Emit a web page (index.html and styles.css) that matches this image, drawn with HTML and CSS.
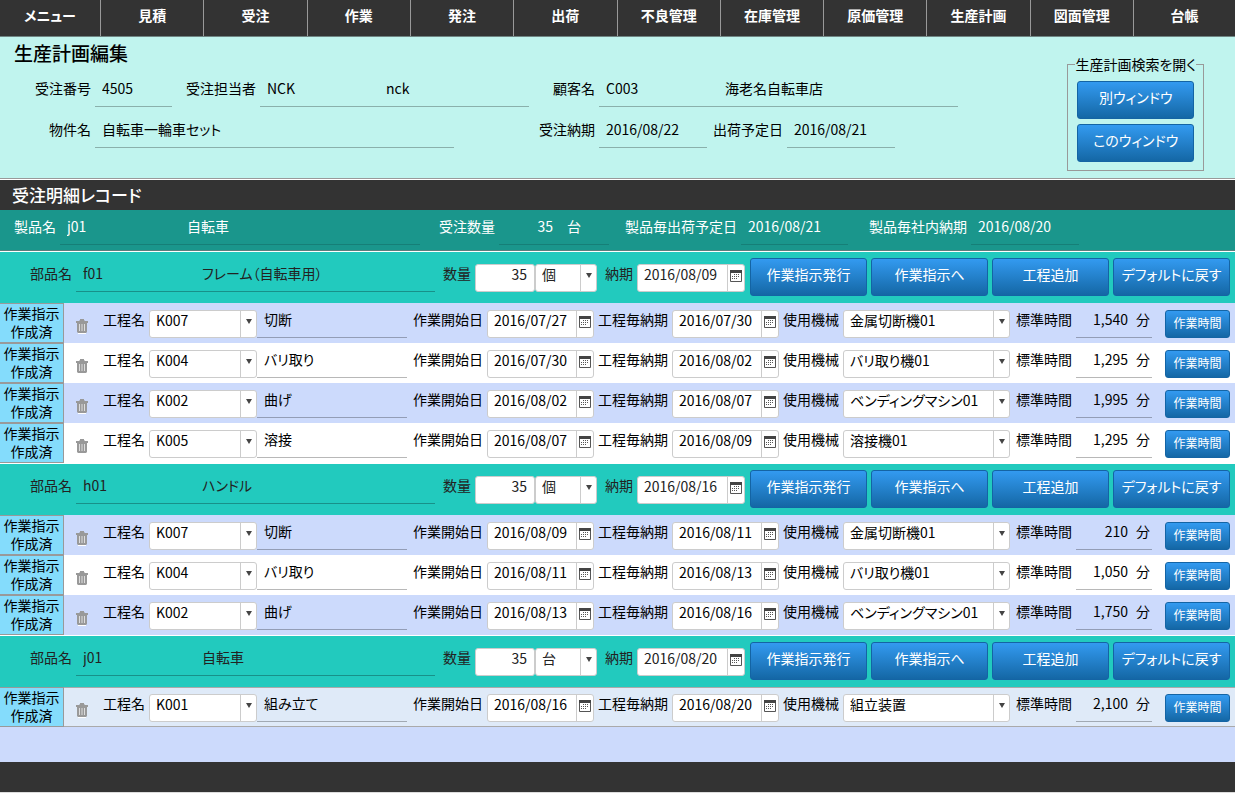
FILE: index.html
```html
<!DOCTYPE html>
<html lang="ja">
<head>
    <meta charset="UTF-8">
    <meta name="viewport" content="width=device-width, initial-scale=1.0">
    <title>生産計画編集</title>
    <link rel="stylesheet" href="styles.css">
</head>
<body>

    <svg class="sprite" aria-hidden="true">
        <symbol id="icon-calendar" viewBox="0 0 12 12">
            <path d="M0.5 0.5h11v11h-11z" fill="#fff" stroke="#555"/>
            <path d="M0 0h12v3H0z" fill="#444"/>
            <path d="M4 4.5h6M2 6.5h8M2 8.5h6" stroke="#555" stroke-dasharray="1 1"/>
        </symbol>
        <symbol id="icon-trash" viewBox="0 0 12 15">
            <path d="M4 0h4v1l1 1h3v2H0V2h3l1-1z" fill="#999"/>
            <path d="M1 4h10v9l-1 1H2l-1-1z" fill="#999"/>
            <path d="M3.5 5v7M6 5v7M8.5 5v7" stroke="#ddd"/>
            <path d="M2 14.5h8" stroke="#fff"/>
        </symbol>
    </svg>

    <nav class="menu">
        <a href="#">メニュー</a>
        <a href="#">見積</a>
        <a href="#">受注</a>
        <a href="#">作業</a>
        <a href="#">発注</a>
        <a href="#">出荷</a>
        <a href="#">不良管理</a>
        <a href="#">在庫管理</a>
        <a href="#">原価管理</a>
        <a href="#">生産計画</a>
        <a href="#">図面管理</a>
        <a href="#">台帳</a>
    </nav>

    <header class="order">
        <div class="order-info">
            <h1>生産計画編集</h1>
            <div class="order-row customer-row">
                <label for="order-no">受注番号</label>
                <input class="line" id="order-no" value="4505" readonly>
                <label for="staff">受注担当者</label>
                <input class="line" id="staff" value="NCK" readonly>
                <input class="line" aria-label="担当者名" value="nck" readonly>
                <label for="customer">顧客名</label>
                <input class="line" id="customer" value="C003" readonly>
                <input class="line" aria-label="顧客名称" value="海老名自転車店" readonly>
            </div>
            <div class="order-row item-row">
                <label for="item">物件名</label>
                <input class="line" id="item" value="自転車一輪車セット" readonly>
                <label for="due">受注納期</label>
                <input class="line" id="due" value="2016/08/22" readonly>
                <label for="ship">出荷予定日</label>
                <input class="line" id="ship" value="2016/08/21" readonly>
            </div>
        </div>
        <fieldset class="search">
            <legend>生産計画検索を開く</legend>
            <button type="button" class="btn">別ウィンドウ</button>
            <button type="button" class="btn">このウィンドウ</button>
        </fieldset>
    </header>

    <main>
        <h2>受注明細レコード</h2>

        <div class="product">
            <label for="product">製品名</label>
            <input class="line" id="product" value="j01" readonly>
            <input class="line" aria-label="製品名称" value="自転車" readonly>
            <label for="order-qty">受注数量</label>
            <input class="line num" id="order-qty" value="35" readonly>
            <input class="line" aria-label="単位" value="台" readonly>
            <label for="product-ship">製品毎出荷予定日</label>
            <input class="line" id="product-ship" value="2016/08/21" readonly>
            <label for="product-due">製品毎社内納期</label>
            <input class="line" id="product-due" value="2016/08/20" readonly>
        </div>

        <!-- f01 フレーム -->
        <section>
            <div class="part">
                <label for="a-part">部品名</label>
                <input class="line" id="a-part" value="f01" readonly>
                <input class="line" aria-label="部品名称" value="フレーム（自転車用）" readonly>
                <label for="a-qty">数量</label>
                <input class="box num" id="a-qty" value="35">
                <span class="combo"><select class="box" aria-label="単位"><option>個</option></select></span>
                <label for="a-due">納期</label>
                <span class="date"><input class="box" id="a-due" value="2016/08/09"><button type="button" aria-label="日付選択"><svg><use href="#icon-calendar"/></svg></button></span>
                <div class="actions">
                    <button type="button" class="btn">作業指示発行</button>
                    <button type="button" class="btn">作業指示へ</button>
                    <button type="button" class="btn">工程追加</button>
                    <button type="button" class="btn">デフォルトに戻す</button>
                </div>
            </div>

            <div class="process">
                <div class="status">作業指示<br>作成済</div>
                <div class="fields">
                    <button type="button" class="trash" aria-label="削除"><svg><use href="#icon-trash"/></svg></button>
                    <label for="a1-code">工程名</label>
                    <span class="combo"><select class="box" id="a1-code"><option>K007</option></select></span>
                    <input class="line" aria-label="工程名称" value="切断" readonly>
                    <label for="a1-start">作業開始日</label>
                    <span class="date"><input class="box" id="a1-start" value="2016/07/27"><button type="button" aria-label="日付選択"><svg><use href="#icon-calendar"/></svg></button></span>
                    <label for="a1-end">工程毎納期</label>
                    <span class="date"><input class="box" id="a1-end" value="2016/07/30"><button type="button" aria-label="日付選択"><svg><use href="#icon-calendar"/></svg></button></span>
                    <label for="a1-machine">使用機械</label>
                    <span class="combo"><select class="box" id="a1-machine"><option>金属切断機01</option></select></span>
                    <label for="a1-time">標準時間</label>
                    <input class="line num" id="a1-time" value="1,540" readonly>
                    <span class="unit">分</span>
                    <button type="button" class="btn small">作業時間</button>
                </div>
            </div>

            <div class="process">
                <div class="status">作業指示<br>作成済</div>
                <div class="fields">
                    <button type="button" class="trash" aria-label="削除"><svg><use href="#icon-trash"/></svg></button>
                    <label for="a2-code">工程名</label>
                    <span class="combo"><select class="box" id="a2-code"><option>K004</option></select></span>
                    <input class="line" aria-label="工程名称" value="バリ取り" readonly>
                    <label for="a2-start">作業開始日</label>
                    <span class="date"><input class="box" id="a2-start" value="2016/07/30"><button type="button" aria-label="日付選択"><svg><use href="#icon-calendar"/></svg></button></span>
                    <label for="a2-end">工程毎納期</label>
                    <span class="date"><input class="box" id="a2-end" value="2016/08/02"><button type="button" aria-label="日付選択"><svg><use href="#icon-calendar"/></svg></button></span>
                    <label for="a2-machine">使用機械</label>
                    <span class="combo"><select class="box" id="a2-machine"><option>バリ取り機01</option></select></span>
                    <label for="a2-time">標準時間</label>
                    <input class="line num" id="a2-time" value="1,295" readonly>
                    <span class="unit">分</span>
                    <button type="button" class="btn small">作業時間</button>
                </div>
            </div>

            <div class="process">
                <div class="status">作業指示<br>作成済</div>
                <div class="fields">
                    <button type="button" class="trash" aria-label="削除"><svg><use href="#icon-trash"/></svg></button>
                    <label for="a3-code">工程名</label>
                    <span class="combo"><select class="box" id="a3-code"><option>K002</option></select></span>
                    <input class="line" aria-label="工程名称" value="曲げ" readonly>
                    <label for="a3-start">作業開始日</label>
                    <span class="date"><input class="box" id="a3-start" value="2016/08/02"><button type="button" aria-label="日付選択"><svg><use href="#icon-calendar"/></svg></button></span>
                    <label for="a3-end">工程毎納期</label>
                    <span class="date"><input class="box" id="a3-end" value="2016/08/07"><button type="button" aria-label="日付選択"><svg><use href="#icon-calendar"/></svg></button></span>
                    <label for="a3-machine">使用機械</label>
                    <span class="combo"><select class="box" id="a3-machine"><option>ベンディングマシン01</option></select></span>
                    <label for="a3-time">標準時間</label>
                    <input class="line num" id="a3-time" value="1,995" readonly>
                    <span class="unit">分</span>
                    <button type="button" class="btn small">作業時間</button>
                </div>
            </div>

            <div class="process">
                <div class="status">作業指示<br>作成済</div>
                <div class="fields">
                    <button type="button" class="trash" aria-label="削除"><svg><use href="#icon-trash"/></svg></button>
                    <label for="a4-code">工程名</label>
                    <span class="combo"><select class="box" id="a4-code"><option>K005</option></select></span>
                    <input class="line" aria-label="工程名称" value="溶接" readonly>
                    <label for="a4-start">作業開始日</label>
                    <span class="date"><input class="box" id="a4-start" value="2016/08/07"><button type="button" aria-label="日付選択"><svg><use href="#icon-calendar"/></svg></button></span>
                    <label for="a4-end">工程毎納期</label>
                    <span class="date"><input class="box" id="a4-end" value="2016/08/09"><button type="button" aria-label="日付選択"><svg><use href="#icon-calendar"/></svg></button></span>
                    <label for="a4-machine">使用機械</label>
                    <span class="combo"><select class="box" id="a4-machine"><option>溶接機01</option></select></span>
                    <label for="a4-time">標準時間</label>
                    <input class="line num" id="a4-time" value="1,295" readonly>
                    <span class="unit">分</span>
                    <button type="button" class="btn small">作業時間</button>
                </div>
            </div>
        </section>

        <!-- h01 ハンドル -->
        <section>
            <div class="part">
                <label for="b-part">部品名</label>
                <input class="line" id="b-part" value="h01" readonly>
                <input class="line" aria-label="部品名称" value="ハンドル" readonly>
                <label for="b-qty">数量</label>
                <input class="box num" id="b-qty" value="35">
                <span class="combo"><select class="box" aria-label="単位"><option>個</option></select></span>
                <label for="b-due">納期</label>
                <span class="date"><input class="box" id="b-due" value="2016/08/16"><button type="button" aria-label="日付選択"><svg><use href="#icon-calendar"/></svg></button></span>
                <div class="actions">
                    <button type="button" class="btn">作業指示発行</button>
                    <button type="button" class="btn">作業指示へ</button>
                    <button type="button" class="btn">工程追加</button>
                    <button type="button" class="btn">デフォルトに戻す</button>
                </div>
            </div>

            <div class="process">
                <div class="status">作業指示<br>作成済</div>
                <div class="fields">
                    <button type="button" class="trash" aria-label="削除"><svg><use href="#icon-trash"/></svg></button>
                    <label for="b1-code">工程名</label>
                    <span class="combo"><select class="box" id="b1-code"><option>K007</option></select></span>
                    <input class="line" aria-label="工程名称" value="切断" readonly>
                    <label for="b1-start">作業開始日</label>
                    <span class="date"><input class="box" id="b1-start" value="2016/08/09"><button type="button" aria-label="日付選択"><svg><use href="#icon-calendar"/></svg></button></span>
                    <label for="b1-end">工程毎納期</label>
                    <span class="date"><input class="box" id="b1-end" value="2016/08/11"><button type="button" aria-label="日付選択"><svg><use href="#icon-calendar"/></svg></button></span>
                    <label for="b1-machine">使用機械</label>
                    <span class="combo"><select class="box" id="b1-machine"><option>金属切断機01</option></select></span>
                    <label for="b1-time">標準時間</label>
                    <input class="line num" id="b1-time" value="210" readonly>
                    <span class="unit">分</span>
                    <button type="button" class="btn small">作業時間</button>
                </div>
            </div>

            <div class="process">
                <div class="status">作業指示<br>作成済</div>
                <div class="fields">
                    <button type="button" class="trash" aria-label="削除"><svg><use href="#icon-trash"/></svg></button>
                    <label for="b2-code">工程名</label>
                    <span class="combo"><select class="box" id="b2-code"><option>K004</option></select></span>
                    <input class="line" aria-label="工程名称" value="バリ取り" readonly>
                    <label for="b2-start">作業開始日</label>
                    <span class="date"><input class="box" id="b2-start" value="2016/08/11"><button type="button" aria-label="日付選択"><svg><use href="#icon-calendar"/></svg></button></span>
                    <label for="b2-end">工程毎納期</label>
                    <span class="date"><input class="box" id="b2-end" value="2016/08/13"><button type="button" aria-label="日付選択"><svg><use href="#icon-calendar"/></svg></button></span>
                    <label for="b2-machine">使用機械</label>
                    <span class="combo"><select class="box" id="b2-machine"><option>バリ取り機01</option></select></span>
                    <label for="b2-time">標準時間</label>
                    <input class="line num" id="b2-time" value="1,050" readonly>
                    <span class="unit">分</span>
                    <button type="button" class="btn small">作業時間</button>
                </div>
            </div>

            <div class="process">
                <div class="status">作業指示<br>作成済</div>
                <div class="fields">
                    <button type="button" class="trash" aria-label="削除"><svg><use href="#icon-trash"/></svg></button>
                    <label for="b3-code">工程名</label>
                    <span class="combo"><select class="box" id="b3-code"><option>K002</option></select></span>
                    <input class="line" aria-label="工程名称" value="曲げ" readonly>
                    <label for="b3-start">作業開始日</label>
                    <span class="date"><input class="box" id="b3-start" value="2016/08/13"><button type="button" aria-label="日付選択"><svg><use href="#icon-calendar"/></svg></button></span>
                    <label for="b3-end">工程毎納期</label>
                    <span class="date"><input class="box" id="b3-end" value="2016/08/16"><button type="button" aria-label="日付選択"><svg><use href="#icon-calendar"/></svg></button></span>
                    <label for="b3-machine">使用機械</label>
                    <span class="combo"><select class="box" id="b3-machine"><option>ベンディングマシン01</option></select></span>
                    <label for="b3-time">標準時間</label>
                    <input class="line num" id="b3-time" value="1,750" readonly>
                    <span class="unit">分</span>
                    <button type="button" class="btn small">作業時間</button>
                </div>
            </div>
        </section>

        <!-- j01 自転車 -->
        <section>
            <div class="part">
                <label for="c-part">部品名</label>
                <input class="line" id="c-part" value="j01" readonly>
                <input class="line" aria-label="部品名称" value="自転車" readonly>
                <label for="c-qty">数量</label>
                <input class="box num" id="c-qty" value="35">
                <span class="combo"><select class="box" aria-label="単位"><option>台</option></select></span>
                <label for="c-due">納期</label>
                <span class="date"><input class="box" id="c-due" value="2016/08/20"><button type="button" aria-label="日付選択"><svg><use href="#icon-calendar"/></svg></button></span>
                <div class="actions">
                    <button type="button" class="btn">作業指示発行</button>
                    <button type="button" class="btn">作業指示へ</button>
                    <button type="button" class="btn">工程追加</button>
                    <button type="button" class="btn">デフォルトに戻す</button>
                </div>
            </div>

            <div class="process current">
                <div class="status">作業指示<br>作成済</div>
                <div class="fields">
                    <button type="button" class="trash" aria-label="削除"><svg><use href="#icon-trash"/></svg></button>
                    <label for="c1-code">工程名</label>
                    <span class="combo"><select class="box" id="c1-code"><option>K001</option></select></span>
                    <input class="line" aria-label="工程名称" value="組み立て" readonly>
                    <label for="c1-start">作業開始日</label>
                    <span class="date"><input class="box" id="c1-start" value="2016/08/16"><button type="button" aria-label="日付選択"><svg><use href="#icon-calendar"/></svg></button></span>
                    <label for="c1-end">工程毎納期</label>
                    <span class="date"><input class="box" id="c1-end" value="2016/08/20"><button type="button" aria-label="日付選択"><svg><use href="#icon-calendar"/></svg></button></span>
                    <label for="c1-machine">使用機械</label>
                    <span class="combo"><select class="box" id="c1-machine"><option>組立装置</option></select></span>
                    <label for="c1-time">標準時間</label>
                    <input class="line num" id="c1-time" value="2,100" readonly>
                    <span class="unit">分</span>
                    <button type="button" class="btn small">作業時間</button>
                </div>
            </div>
        </section>
    </main>

    <footer></footer>

</body>
</html>
```
FILE: styles.css
```css
* {
    box-sizing: border-box;
}

body {
    margin: 0;
    min-height: 100vh;
    display: flex;
    flex-direction: column;
    background-color: #ccdafc;
    color: #000;
    font-family: "Noto Sans CJK JP", sans-serif;
    font-size: 14px;
    font-feature-settings: "palt";
}

input, select, button {
    margin: 0;
    font: inherit;
    font-feature-settings: inherit;
    color: inherit;
}

.sprite {
    display: none;
}

/* menu */
.menu {
    display: grid;
    grid-template-columns: 101px repeat(10, 1fr) 101px;
    background-color: #333;
    border-bottom: 1px solid #6f8583;
}

.menu a {
    height: 36px;
    line-height: 30px;
    border-right: 1px solid #999;
    color: #fff;
    font-weight: bold;
    text-align: center;
    text-decoration: none;
}

.menu a:last-child {
    border-right: none;
}

/* common fields */
label {
    height: 34px;
    line-height: 30px;
    padding-right: 4px;
    text-align: right;
    white-space: nowrap;
}

.line {
    width: 100%;
    min-width: 0;
    height: 34px;
    padding: 0 7px 3px;
    border: none;
    border-bottom: 1px solid rgba(0, 0, 0, 0.28);
    background: none;
    outline: none;
}

.box {
    display: block;
    width: 100%;
    min-width: 0;
    height: 28px;
    padding: 0 6px 8px;
    border: 1px solid #ccc;
    border-radius: 3px;
    background-color: #fff;
    line-height: 18px;
    appearance: none;
}

.num {
    padding-right: 7px;
    text-align: right;
}

.combo, .date {
    position: relative;
    display: block;
    min-width: 0;
}

.combo::after {
    content: "";
    position: absolute;
    right: 5px;
    top: 9px;
    border: 3px solid transparent;
    border-top: 5px solid #444;
    border-bottom: none;
    pointer-events: none;
}

.combo::before {
    content: "";
    position: absolute;
    right: 16px;
    top: 1px;
    bottom: 1px;
    border-left: 1px solid #ccc;
}

.date button {
    position: absolute;
    right: 1px;
    top: 1px;
    bottom: 1px;
    width: 17px;
    padding: 0 0 4px;
    border: none;
    border-left: 1px solid #ccc;
    background: none;
}

.date svg {
    display: block;
    width: 12px;
    height: 12px;
    margin: 0 auto;
}

.btn {
    width: 117px;
    height: 38px;
    padding: 0 0 6px;
    border: 1px solid #1464a4;
    border-radius: 3px;
    background: linear-gradient(#339af0, #1467a5);
    color: #fff;
    white-space: nowrap;
    cursor: pointer;
}

.btn.small {
    width: 65px;
    height: 28px;
    padding-bottom: 3px;
    font-size: 12px;
    justify-self: end;
}

/* order header */
.order {
    display: flex;
    justify-content: space-between;
    align-items: flex-start;
    background-color: #c0f4ee;
    border-bottom: 1px solid #fff;
    box-shadow: inset 0 -1px #999;
    padding-bottom: 8px;
}

h1 {
    margin: 2px 0 6px 14px;
    font-size: 19px;
    font-weight: 500;
    line-height: 28px;
}

.order-row {
    display: grid;
    margin-bottom: 7px;
}

.customer-row {
    grid-template-columns: 95px 77px 88px 119px 150px 70px 119px 240px;
}

.item-row {
    grid-template-columns: 95px 359px 145px 108px 80px 108px;
}

.search {
    display: flex;
    flex-direction: column;
    align-items: center;
    gap: 5px;
    margin: 19px 31px 0 0;
    padding: 9px 7px 8px;
    border: 1px solid #999;
}

.search legend {
    padding: 0;
    line-height: 16px;
    white-space: nowrap;
}

/* detail records */
main {
    flex: 1;
    padding-bottom: 35px;
}

h2 {
    margin: 0;
    padding-left: 12px;
    background-color: #333;
    color: #fff;
    font-size: 17px;
    font-weight: 500;
    line-height: 30px;
}

.product {
    display: grid;
    grid-template-columns: 60px 120px 240px 79px 61px 49px 132px 107px 123px 108px;
    padding: 1px 0 5px;
    border-bottom: 1px solid #5a7f7d;
    background-color: #1a968c;
    color: #fff;
}

.product .line {
    border-bottom-color: rgba(0, 0, 0, 0.15);
}

.part {
    display: grid;
    grid-template-columns: 76px 119px 1fr 40px 60px 62px 40px 108px 485px;
    align-items: end;
    padding: 6px 5px 11px 0;
    border-top: 1px solid #fff;
    background-color: #22cabe;
    color: #222;
}

.actions {
    display: flex;
    justify-content: flex-end;
    gap: 4px;
    height: 34px;
}

.process {
    display: flex;
    height: 40px;
    background-color: #fff;
}

.process:nth-child(even) {
    background-color: #ccdafc;
}

.process.current {
    background-color: #dfeaf8;
    box-shadow: inset 0 1px #aaa, inset 0 -1px #aaa;
}

.status {
    width: 64px;
    border: 1px solid #999;
    border-left: none;
    background-color: #84dcfc;
    line-height: 18px;
    text-align: center;
}

.fields {
    flex: 1;
    display: grid;
    grid-template-columns: 36px 49px 108px 150px 80px 107px 78px 107px 64px 1fr 66px 59px 17px 78px;
    align-items: end;
    padding: 0 5px 5px 0;
}

.trash {
    height: 24px;
    padding: 0;
    border: none;
    background: none;
    cursor: pointer;
}

.trash svg {
    display: block;
    width: 12px;
    height: 15px;
    margin: 0 auto;
}

.unit {
    height: 34px;
    line-height: 30px;
    padding-left: 1px;
    border-bottom: 1px solid rgba(0, 0, 0, 0.28);
}

footer {
    height: 31px;
    background-color: #333;
    border-bottom: 1px solid #ddd;
}
```
